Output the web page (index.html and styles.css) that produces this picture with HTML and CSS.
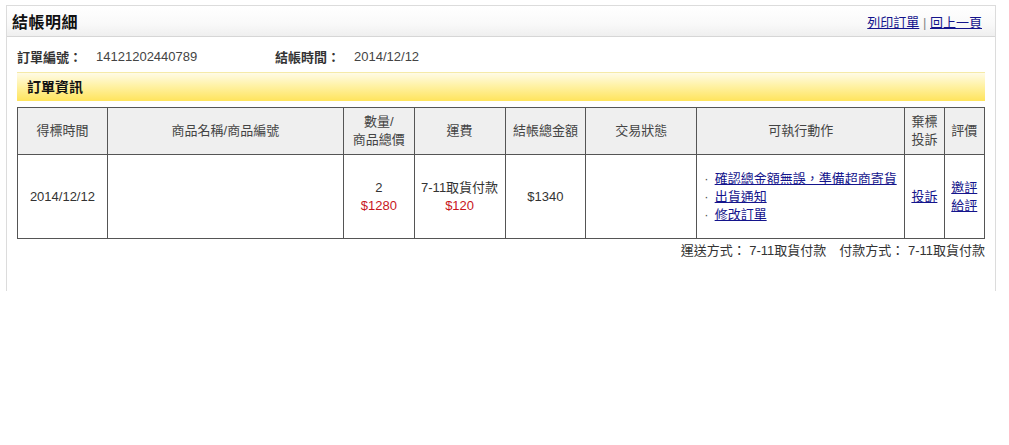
FILE: index.html
```html
<!DOCTYPE html>
<html lang="zh-Hant">
<head>
  <meta charset="UTF-8">
  <title>結帳明細</title>
  <link rel="stylesheet" href="styles.css">
</head>
<body>

<div class="panel">
  <div class="panel-head">
    <h1>結帳明細</h1>
    <div class="head-links">
      <a href="#">列印訂單</a> <span class="sep">|</span> <a href="#">回上一頁</a>
    </div>
  </div>

  <div class="panel-body">
    <div class="order-info">
      <span class="label">訂單編號：</span>
      <span class="value order-no">14121202440789</span>
      <span class="label">結帳時間：</span>
      <span class="value">2014/12/12</span>
    </div>

    <div class="section-bar">訂單資訊</div>

    <table class="order-table">
      <colgroup>
        <col class="c-time">
        <col class="c-name">
        <col class="c-qty">
        <col class="c-ship">
        <col class="c-total">
        <col class="c-status">
        <col class="c-action">
        <col class="c-report">
        <col class="c-rate">
      </colgroup>
      <thead>
        <tr>
          <th>得標時間</th>
          <th>商品名稱/商品編號</th>
          <th>數量/<br>商品總價</th>
          <th>運費</th>
          <th>結帳總金額</th>
          <th>交易狀態</th>
          <th>可執行動作</th>
          <th>棄標<br>投訴</th>
          <th>評價</th>
        </tr>
      </thead>
      <tbody>
        <tr>
          <td>2014/12/12</td>
          <td></td>
          <td>2<br><span class="price">$1280</span></td>
          <td>7-11取貨付款<br><span class="price">$120</span></td>
          <td>$1340</td>
          <td></td>
          <td class="actions">
            <ul>
              <li><a href="#">確認總金額無誤，準備超商寄貨</a></li>
              <li><a href="#">出貨通知</a></li>
              <li><a href="#">修改訂單</a></li>
            </ul>
          </td>
          <td><a href="#">投訴</a></td>
          <td><a href="#">邀評</a><br><a href="#">給評</a></td>
        </tr>
      </tbody>
    </table>

    <div class="delivery">
      運送方式： 7-11取貨付款　付款方式： 7-11取貨付款
    </div>
  </div>
</div>

</body>
</html>
```

FILE: styles.css
```css
body {
  margin: 0;
  padding: 0;
  font-family: "Liberation Sans", Arial, "Noto Sans CJK TC", sans-serif;
  font-size: 13px;
  color: #333;
  background: #fff;
}
a {
  color: #14148c;
}
.panel {
  width: 990px;
  box-sizing: border-box;
  margin: 5px 0 0 6px;
  border: 1px solid #dcdcdc;
  border-bottom: none;
  height: 286px;
}
.panel-head {
  height: 30px;
  border-bottom: 1px solid #d6d6d6;
  background: linear-gradient(to bottom, #ffffff 0%, #f9f9f9 60%, #efefef 100%);
  display: flex;
  align-items: center;
  justify-content: space-between;
  padding: 0 13px 0 5px;
}
.panel-head h1 {
  margin: 0;
  font-size: 16px;
  font-weight: bold;
  color: #111;
  letter-spacing: 0.5px;
}
.head-links {
  font-size: 13px;
  padding-top: 1px;
}
.head-links .sep {
  color: #888;
}
.panel-body {
  padding: 0 10px;
}
.order-info {
  display: flex;
  align-items: center;
  height: 31px;
  padding-top: 4px;
}
.order-info .label {
  font-weight: bold;
  color: #333;
}
.order-info .value {
  color: #444;
  margin-left: 14px;
}
.order-info .order-no {
  width: 179px;
}
.section-bar {
  height: 28px;
  line-height: 29px;
  border-top: 1px solid #f5eaa8;
  background: linear-gradient(to bottom, #fffbe6 0%, #fff2a6 45%, #ffe45c 100%);
  padding-left: 10px;
  font-size: 14px;
  font-weight: bold;
  color: #111;
  margin-bottom: 6px;
}
.order-table {
  width: 968px;
  border-collapse: collapse;
  table-layout: fixed;
}
.order-table th,
.order-table td {
  border: 1px solid #555;
  text-align: center;
  padding: 0;
  line-height: 18px;
}
.order-table th {
  background: #efefef;
  font-weight: normal;
  color: #444;
  height: 46px;
}
.order-table td {
  height: 83px;
  color: #333;
}
.c-time { width: 89px; }
.c-name { width: 234px; }
.c-qty { width: 70px; }
.c-ship { width: 90px; }
.c-total { width: 80px; }
.c-status { width: 110px; }
.c-action { width: 206px; }
.c-report { width: 39px; }
.c-rate { width: 40px; }
.price {
  color: #c8161d;
}
.order-table td.actions {
  text-align: left;
  padding-left: 7px;
}
.actions ul {
  list-style: none;
  margin: 0;
  padding: 0;
}
.actions li::before {
  content: "·";
  color: #555;
  margin-right: 6px;
}
.delivery {
  text-align: right;
  padding-top: 1px;
  color: #333;
}
```
